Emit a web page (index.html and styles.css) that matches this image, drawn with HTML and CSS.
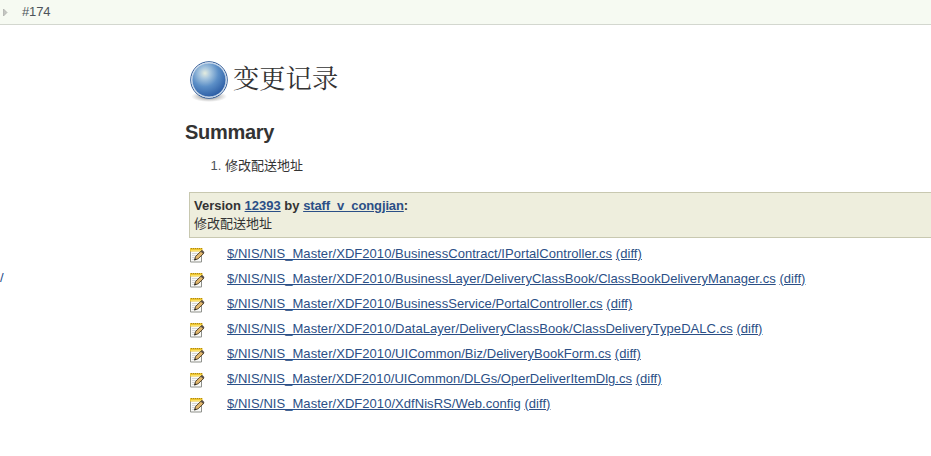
FILE: index.html
```html
<!DOCTYPE html>
<html lang="zh-CN">
<head>
<meta charset="utf-8">
<title>变更记录</title>
<link rel="stylesheet" href="styles.css">
</head>
<body>
<svg class="defs" width="0" height="0" aria-hidden="true">
  <symbol id="edit" viewBox="0 0 16 16">
    <path d="M1.500 2.500h11v12.500h-11z" fill="#fafaf8" stroke="#8f918c"/>
    <path d="M3 6.500h7M3 8.500h5M3 10.500h3M3 12.500h3" stroke="#d4d6d8"/>
    <path d="M1 1h12.500v3.500H1z" fill="#edc52f"/>
    <path d="M2 1.500h1M4 1.500h1M6 1.500h1M8 1.500h1M10 1.500h1M12 1.500h1" stroke="#a98520"/>
    <path d="M2 3.500h10" stroke="#fbe16b"/>
    <path d="M5.500 13l1.200-3.700 5.800-5.600 2.500 2.400-5.900 5.700z" fill="#e2b76c" stroke="#594a30"/>
    <path d="M11.700 4.500l1.500-1.500 2.300 2.300-1.500 1.500z" fill="#5a5047"/>
    <path d="M5.300 13.400l.7-2.200 1.500 1.400z" fill="#222"/>
  </symbol>
</svg>
<header class="crumbs">
  <svg class="arrow" width="6" height="9" viewBox="0 0 6 9"><path d="M.5 1L4 4.500.5 8z" fill="#c4c6c2" stroke="#a9aba7" stroke-width=".7"/></svg>
  <span>#174</span>
</header>
<div class="layout">
  <aside class="side">/</aside>
  <main class="main">
    <h1>
      <svg class="ball" width="42" height="44" viewBox="0 0 42 44">
        <defs>
          <radialGradient id="blue" cx=".38" cy=".3" r=".72">
            <stop offset="0" stop-color="#e4ecdf"/><stop offset=".22" stop-color="#a9c7df"/><stop offset=".55" stop-color="#5c8fc7"/><stop offset="1" stop-color="#2b5ca4"/>
          </radialGradient>
          <radialGradient id="shade"><stop offset=".4" stop-color="#999" stop-opacity=".75"/><stop offset="1" stop-color="#aaa" stop-opacity="0"/></radialGradient>
        </defs>
        <ellipse cx="21" cy="36.500" rx="18" ry="5.500" fill="url(#shade)"/>
        <circle cx="21" cy="20" r="18.300" fill="#fff" stroke="#305b98" stroke-width="1"/>
        <circle cx="21" cy="20" r="17" fill="url(#blue)" stroke="#c2d5ea" stroke-width="1"/>
      </svg>
      <span>变更记录</span>
    </h1>
    <h2>Summary</h2>
    <ol><li>修改配送地址</li></ol>
    <section class="version">
      <b>Version <a>12393</a> by <a class="user">staff_v_congjian</a>:</b>
      <div>修改配送地址</div>
    </section>
    <ul class="files">
      <li><svg><use href="#edit"/></svg><p><a>$/NIS/NIS_Master/XDF2010/BusinessContract/IPortalController.cs</a> <a>(diff)</a></p></li>
      <li><svg><use href="#edit"/></svg><p><a>$/NIS/NIS_Master/XDF2010/BusinessLayer/DeliveryClassBook/ClassBookDeliveryManager.cs</a> <a>(diff)</a></p></li>
      <li><svg><use href="#edit"/></svg><p><a>$/NIS/NIS_Master/XDF2010/BusinessService/PortalController.cs</a> <a>(diff)</a></p></li>
      <li><svg><use href="#edit"/></svg><p><a>$/NIS/NIS_Master/XDF2010/DataLayer/DeliveryClassBook/ClassDeliveryTypeDALC.cs</a> <a>(diff)</a></p></li>
      <li><svg><use href="#edit"/></svg><p><a>$/NIS/NIS_Master/XDF2010/UICommon/Biz/DeliveryBookForm.cs</a> <a>(diff)</a></p></li>
      <li class="tight"><svg><use href="#edit"/></svg><p><a>$/NIS/NIS_Master/XDF2010/UICommon/DLGs/OperDeliverItemDlg.cs</a> <a>(diff)</a></p></li>
      <li><svg><use href="#edit"/></svg><p><a>$/NIS/NIS_Master/XDF2010/XdfNisRS/Web.config</a> <a>(diff)</a></p></li>
    </ul>
  </main>
</div>
</body>
</html>
```
FILE: styles.css
```css
* { box-sizing: border-box; }
body {
  margin: 0;
  height: 456px;
  overflow: hidden;
  background: #fff;
  color: #333;
  font: 13px/18px "Liberation Sans", Arial, "Noto Sans CJK SC", sans-serif;
}
.defs { display: block; height: 0; }
.crumbs {
  display: flex;
  align-items: center;
  gap: 13px;
  height: 25px;
  padding: 0 0 1px 3px;
  background: #f6faf2;
  border-bottom: 1px solid #d3d7cf;
  color: #4d545b;
  letter-spacing: -.15px;
}
.arrow { margin-top: 1px; }
.layout { display: flex; }
.side { width: 185px; padding-top: 244px; color: #204a87; }
.main { flex: 1; min-width: 0; }
h1 {
  display: flex;
  gap: 3px;
  height: 44px;
  margin: 35px 0 0 3px;
  font-size: 26.300px;
  font-weight: 400;
  line-height: 34px;
}
h1 span { font-family: "Noto Serif CJK SC", "Noto Sans CJK SC", serif; }
h2 { margin: 16px 0 0; font-size: 20px; line-height: 24px; letter-spacing: -.3px; }
ol { margin: 13px 0 0; padding-left: 40px; }
li::marker { color: #4d545b; }
.version {
  height: 46px;
  margin: 17px 0 0 4px;
  padding: 4px;
  background: #eeeedd;
  border: 1px solid #c8c8b0;
  border-right: 0;
}
a { color: #2b4f86; text-decoration: underline; }
.user { letter-spacing: -.12px; }
.files { margin: 3px 0 0 4px; padding: 0; list-style: none; }
.files li { display: flex; height: 25px; letter-spacing: .047px; }
.files .tight { letter-spacing: .02px; }
.files svg { width: 16px; height: 16px; margin: 6px 22px 0 0; }
.files p { margin: 4px 0 0; white-space: nowrap; }
```
